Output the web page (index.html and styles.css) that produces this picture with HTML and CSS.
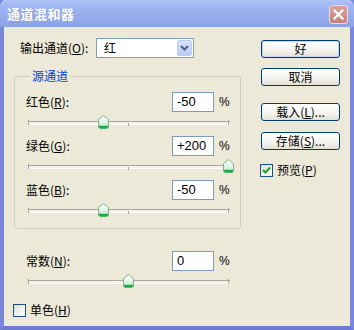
FILE: index.html
```html
<!DOCTYPE html>
<html>
<head>
<meta charset="utf-8">
<link rel="stylesheet" href="styles.css">
</head>
<body>
<div class="window">
  <div class="titlebar">
    <span class="title">通道混和器</span>
    <div class="close"><svg width="11" height="11" viewBox="0 0 11 11"><path d="M1.5 1.5 L9.5 9.5 M9.5 1.5 L1.5 9.5" stroke="#fff" stroke-width="2.2" stroke-linecap="square"/></svg></div>
  </div>
  <div class="client">
    <div class="left">
      <div class="out-row">
        <span class="out-label">输出通道(<u>O</u>):</span>
        <div class="select">
          <span class="sel-text">红</span>
          <span class="sel-btn"><svg width="9" height="6" viewBox="0 0 9 6"><path d="M1 1 L4.5 4.5 L8 1" fill="none" stroke="#4D6185" stroke-width="2"/></svg></span>
        </div>
      </div>
      <fieldset class="group">
        <legend>源通道</legend>
        <div class="chan">
          <div class="chan-top"><span class="chan-label">红色(<u>R</u>):</span><span class="num">-50</span><span class="pct">%</span></div>
          <div class="slider"><div class="track"></div><span class="tick t0"></span><span class="tick t1"></span><span class="tick t2"></span><svg class="thumb" style="left:70px" width="11" height="14" viewBox="0 0 11 14"><defs><linearGradient id="g1" x1="0" y1="0" x2="0" y2="1"><stop offset="0" stop-color="#ffffff"/><stop offset="1" stop-color="#c6ecd0"/></linearGradient></defs><path d="M0.5 12.5 V4.5 L5.5 0.5 L10.5 4.5 V12.5 Z" fill="url(#g1)" stroke="#86ad92"/><path d="M1 11.5 H10 M1.5 13 H9.5" stroke="#22a846" stroke-width="1.3"/></svg></div>
        </div>
        <div class="chan">
          <div class="chan-top"><span class="chan-label">绿色(<u>G</u>):</span><span class="num">+200</span><span class="pct">%</span></div>
          <div class="slider"><div class="track"></div><span class="tick t0"></span><span class="tick t1"></span><span class="tick t2"></span><svg class="thumb" style="left:195px" width="11" height="14" viewBox="0 0 11 14"><path d="M0.5 12.5 V4.5 L5.5 0.5 L10.5 4.5 V12.5 Z" fill="url(#g1)" stroke="#86ad92"/><path d="M1 11.5 H10 M1.5 13 H9.5" stroke="#22a846" stroke-width="1.3"/></svg></div>
        </div>
        <div class="chan">
          <div class="chan-top"><span class="chan-label">蓝色(<u>B</u>):</span><span class="num">-50</span><span class="pct">%</span></div>
          <div class="slider"><div class="track"></div><span class="tick t0"></span><span class="tick t1"></span><span class="tick t2"></span><svg class="thumb" style="left:70px" width="11" height="14" viewBox="0 0 11 14"><path d="M0.5 12.5 V4.5 L5.5 0.5 L10.5 4.5 V12.5 Z" fill="url(#g1)" stroke="#86ad92"/><path d="M1 11.5 H10 M1.5 13 H9.5" stroke="#22a846" stroke-width="1.3"/></svg></div>
        </div>
      </fieldset>
      <div class="chan const">
        <div class="chan-top"><span class="chan-label">常数(<u>N</u>):</span><span class="num">0</span><span class="pct">%</span></div>
        <div class="slider"><div class="track"></div><span class="tick t0"></span><span class="tick t2"></span><svg class="thumb" style="left:95px" width="11" height="14" viewBox="0 0 11 14"><path d="M0.5 12.5 V4.5 L5.5 0.5 L10.5 4.5 V12.5 Z" fill="url(#g1)" stroke="#86ad92"/><path d="M1 11.5 H10 M1.5 13 H9.5" stroke="#22a846" stroke-width="1.3"/></svg></div>
      </div>
      <div class="check mono"><span class="box"></span><span>单色(<u>H</u>)</span></div>
    </div>
    <div class="right">
      <div class="btn default">好</div>
      <div class="btn b-cancel">取消</div>
      <div class="btn b-load">载入(<u>L</u>)...</div>
      <div class="btn b-save">存储(<u>S</u>)...</div>
      <div class="check preview"><span class="box"><svg width="11" height="11" viewBox="0 0 11 11"><path d="M2 5 L4.5 7.5 L9 2.5" fill="none" stroke="#21a121" stroke-width="2"/></svg></span><span>预览(<u>P</u>)</span></div>
    </div>
  </div>
</div>
</body>
</html>
```

FILE: styles.css
```css
html, body {
  margin: 0;
  padding: 0;
  background: #ece9d8;
}
body {
  font-family: "Noto Sans CJK SC", "DejaVu Sans", sans-serif;
  font-size: 12px;
  line-height: 14px;
  color: #000;
}
u { text-decoration: underline; text-underline-offset: 1px; }

.window {
  width: 354px;
  height: 330px;
  box-sizing: border-box;
  display: flex;
  flex-direction: column;
  background: #ece9d8;
  border-left: 4px solid #7a86d9;
  border-right: 4px solid #7a86d9;
  border-bottom: 4px solid #6f7bd2;
}
.titlebar {
  height: 27px;
  margin: 0 -4px;
  padding: 0 6px 0 7px;
  flex: none;
  display: flex;
  align-items: center;
  justify-content: space-between;
  background: linear-gradient(to bottom, #b0c4f6 0%, #9db5f0 25%, #93abeb 70%, #8aa2e5 100%);
  border-radius: 6px 6px 0 0;
}
.title {
  color: #fff;
  font-weight: bold;
  font-size: 13px;
  letter-spacing: 0.5px;
  text-shadow: 1px 1px 0 #8b9fd6;
}
.close {
  width: 19px;
  height: 19px;
  box-sizing: border-box;
  border: 1px solid #f1dcdc;
  border-radius: 3px;
  background: linear-gradient(to bottom, #d9a39e, #c7817b);
  display: flex;
  align-items: center;
  justify-content: center;
  margin-top: 1px;
}

.client {
  flex: 1;
  display: flex;
  padding: 11px 0 0 10px;
}
.left {
  width: 227px;
  display: flex;
  flex-direction: column;
}
.out-row {
  display: flex;
  align-items: center;
  height: 20px;
  padding-left: 6px;
}
.out-label { width: 76px; }
.select {
  width: 98px;
  height: 20px;
  box-sizing: border-box;
  border: 1px solid #7f9db9;
  background: #fff;
  display: flex;
  align-items: center;
  justify-content: space-between;
  padding: 1px;
}
.sel-text { padding-left: 6px; }
.sel-btn {
  width: 15px;
  height: 16px;
  box-sizing: border-box;
  border: 1px solid #bccdf5;
  border-radius: 2px;
  background: linear-gradient(to bottom, #d6e1fb, #b9cbf5);
  display: flex;
  align-items: center;
  justify-content: center;
}

.group {
  margin: 11px 0 0 0;
  padding: 9px 10px 11px 11px;
  min-width: 0;
  border: 1px solid #d0d0bf;
  border-radius: 3px;
  width: 227px;
  box-sizing: border-box;
}
.group legend {
  color: #0046d5;
  padding: 0 2px;
  margin-left: 4px;
  line-height: 14px;
}
.chan + .chan { margin-top: 7px; }
.chan-top {
  display: flex;
  align-items: center;
  height: 20px;
}
.chan-label { flex: 1; }
.num {
  width: 42px;
  height: 20px;
  box-sizing: border-box;
  border: 1px solid #7f9db9;
  background: #fff;
  padding: 2px 0 0 4px;
  font-family: "Liberation Sans", "DejaVu Sans", sans-serif;
  font-size: 13px;
}
.pct {
  width: 11px;
  margin-left: 5px;
  font-family: "Liberation Sans", sans-serif;
  font-size: 12px;
}
.slider {
  position: relative;
  height: 14px;
  margin: 3px 0 0 2px;
  width: 202px;
}
.track {
  position: absolute;
  left: 0;
  right: 0;
  top: 6px;
  height: 2px;
  border-top: 1px solid #a8a698;
  border-bottom: 1px solid #ffffff;
  background: #f4f3ee;
}
.tick {
  position: absolute;
  top: 5px;
  width: 1px;
  height: 5px;
  background: #a8a698;
}
.t0 { left: 0; }
.t1 { left: 100px; top: 8px; height: 3px; }
.t2 { left: 200px; }
.thumb {
  position: absolute;
  top: 0;
}

.const {
  margin-top: 22px;
  padding: 0 11px 0 12px;
}
.check {
  display: flex;
  align-items: center;
  height: 14px;
}
.box {
  width: 13px;
  height: 13px;
  box-sizing: border-box;
  border: 1px solid #1c5180;
  background: linear-gradient(135deg, #dcdcd7, #ffffff);
  margin-right: 4px;
  display: flex;
  align-items: center;
  justify-content: center;
}
.mono { margin: 15px 0 0 -1px; }

.right {
  width: 79px;
  margin-left: 20px;
  padding-top: 2px;
  display: flex;
  flex-direction: column;
}
.btn {
  height: 18px;
  box-sizing: border-box;
  border: 1px solid #003c74;
  border-radius: 3px;
  background: linear-gradient(to bottom, #ffffff 0%, #f4f3ee 60%, #e3e0d5 100%);
  display: flex;
  align-items: center;
  justify-content: center;
}
.default { box-shadow: inset 0 0 0 1px #c6d6f6; }
.b-cancel { margin-top: 10px; }
.b-load { margin-top: 17px; }
.b-save { margin-top: 11px; }
.preview { margin-top: 13px; margin-left: -1px; height: 14px; }
```
